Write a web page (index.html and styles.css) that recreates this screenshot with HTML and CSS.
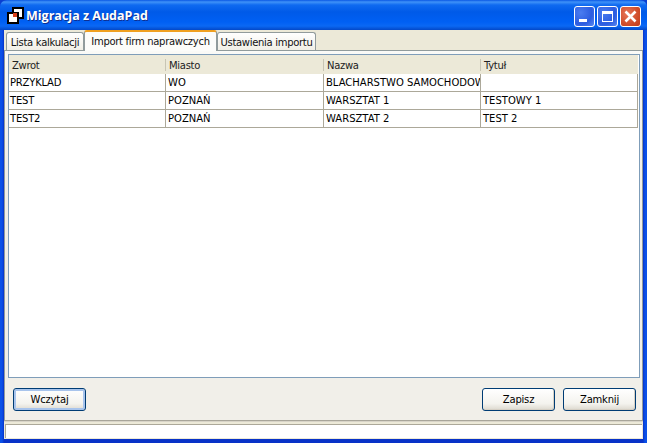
FILE: index.html
```html
<!DOCTYPE html>
<html lang="pl">
<head>
<meta charset="utf-8">
<title>Migracja z AudaPad</title>
<link rel="stylesheet" href="styles.css">
</head>
<body>
<div class="window">
  <div class="titlebar">
    <svg class="appicon" width="17" height="17" viewBox="0 0 17 17">
      <rect x="6" y="1" width="10" height="10" fill="#fff" stroke="#000" stroke-width="2"/>
      <rect x="1" y="6" width="10" height="10" fill="#fff" stroke="#000" stroke-width="2"/>
      <rect x="6" y="6" width="4" height="4" fill="#d8401c"/>
      <rect x="10" y="5" width="2" height="2" fill="#000"/>
    </svg>
    <span class="title">Migracja z AudaPad</span>
    <div class="controls">
      <div class="ctl ctl-blue">
        <svg width="19" height="19" viewBox="0 0 19 19"><rect x="4" y="12" width="8" height="3" fill="#fff"/></svg>
      </div>
      <div class="ctl ctl-blue">
        <svg width="19" height="19" viewBox="0 0 19 19"><rect x="4.5" y="4.5" width="10" height="10" fill="none" stroke="#fff"/><rect x="4" y="4" width="11" height="3" fill="#fff"/></svg>
      </div>
      <div class="ctl ctl-red">
        <svg width="19" height="19" viewBox="0 0 19 19"><path d="M4.5 4.5L14.5 14.5M14.5 4.5L4.5 14.5" stroke="#fff" stroke-width="2.6" fill="none"/></svg>
      </div>
    </div>
  </div>
  <div class="client">
    <div class="tabs">
      <div class="tab tab-first">Lista kalkulacji</div>
      <div class="tab tab-active">Import firm naprawczych</div>
      <div class="tab tab-last">Ustawienia importu</div>
    </div>
    <div class="panel">
      <div class="tablebox">
        <table class="grid">
          <thead>
            <tr><th>Zwrot</th><th>Miasto</th><th>Nazwa</th><th>Tytuł</th></tr>
          </thead>
          <tbody>
            <tr><td>PRZYKLAD</td><td>WO</td><td>BLACHARSTWO SAMOCHODOWE</td><td></td></tr>
            <tr><td>TEST</td><td>POZNAŃ</td><td>WARSZTAT 1</td><td>TESTOWY 1</td></tr>
            <tr><td>TEST2</td><td>POZNAŃ</td><td>WARSZTAT 2</td><td>TEST 2</td></tr>
          </tbody>
        </table>
      </div>
      <div class="actions">
        <button class="btn btn-focus">Wczytaj</button>
        <div class="spacer"></div>
        <button class="btn">Zapisz</button>
        <button class="btn">Zamknij</button>
      </div>
    </div>
    <div class="status"><div class="status-box"></div></div>
  </div>
</div>
</body>
</html>
```

FILE: styles.css
```css
html, body {
  margin: 0;
  padding: 0;
  width: 647px;
  height: 443px;
  overflow: hidden;
  background: #0a3fd0;
}
.window {
  width: 647px;
  height: 443px;
  display: flex;
  flex-direction: column;
  font: 10px "DejaVu Sans", sans-serif;
  color: #000;
  background: linear-gradient(to right, #0a50e8 0, #0a50e8 2px, #0832c8 4px, #0832c8 643px, #0a50e8 645px);
  border-radius: 7px 7px 0 0;
  overflow: hidden;
}
.titlebar {
  height: 30px;
  flex: none;
  display: flex;
  align-items: center;
  padding: 0 6px 0 7px;
  background: linear-gradient(to bottom, #0a58e4 0, #3f92f8 2px, #0f6af0 5px, #005ae8 12px, #0060f4 22px, #0a68f4 26px, #0348c8 30px);
}
.appicon {
  flex: none;
  margin-right: 2px;
  margin-top: 1px;
}
.title {
  font: bold 12.5px "Open Sans", sans-serif;
  color: #fff;
  text-shadow: 1px 1px 0 #0f2f90;
  flex: 1;
}
.controls {
  display: flex;
  gap: 2px;
  margin-top: 3px;
}
.ctl {
  width: 21px;
  height: 21px;
  box-sizing: border-box;
  border: 1px solid #fff;
  border-radius: 3px;
  display: flex;
  align-items: center;
  justify-content: center;
}
.ctl svg {
  flex: none;
}
.ctl-blue {
  background: radial-gradient(circle at 30% 30%, #4a7cf0 0, #2c5ce0 60%, #5a88f0 100%);
}
.ctl-red {
  background: radial-gradient(circle at 35% 35%, #e8775a 0, #d04e2c 60%, #c03a18 100%);
}
.client {
  flex: 1;
  display: flex;
  flex-direction: column;
  margin: 0 4px 4px;
  background: #ece9d8;
  min-height: 0;
}
.tabs {
  display: flex;
  align-items: flex-end;
  height: 20px;
  flex: none;
  padding: 0 0 0 2px;
  box-sizing: border-box;
  position: relative;
  z-index: 1;
}
.tab {
  box-sizing: border-box;
  height: 18px;
  line-height: 19px;
  text-align: center;
  border: 1px solid #919b9c;
  border-bottom: none;
  border-radius: 3px 3px 0 0;
  background: linear-gradient(to bottom, #fff, #f1efe6);
  white-space: nowrap;
  color: #111;
  letter-spacing: -0.3px;
}
.tab-first {
  width: 78px;
}
.tab-active {
  width: 133px;
  height: 21px;
  line-height: 19px;
  margin-bottom: -1px;
  background: #fcfcfa;
  border-top: 2px solid #f0a020;
  border-left-color: #919b9c;
  position: relative;
  z-index: 2;
}
.tab-last {
  width: 99px;
}
.panel {
  flex: 1;
  min-height: 0;
  display: flex;
  flex-direction: column;
  border: 1px solid #919b9c;
  border-bottom-color: #a8a59a;
  background: linear-gradient(to bottom, #fafaf7, #f1efe9 120px);
  padding: 0 2px 0 3px;
}
.tablebox {
  height: 324px;
  flex: none;
  margin-top: 3px;
  box-sizing: border-box;
  border: 1px solid #7f9db9;
  background: #fff;
  overflow: hidden;
}
.grid {
  border-collapse: separate;
  border-spacing: 0;
  table-layout: fixed;
  width: 629px;
}
.grid th:nth-child(2) {
  width: 158px;
}
.grid th {
  font-weight: normal;
  text-align: left;
  height: 19px;
  padding: 2px 0 0 3px;
  background: #ece9d8 linear-gradient(#c8c5b4, #c8c5b4) right center / 1px 12px no-repeat;
  color: #222;
  box-sizing: border-box;
  white-space: nowrap;
  overflow: hidden;
  letter-spacing: -0.3px;
}
.grid th:last-child {
  background: #ece9d8;
}
.grid td {
  height: 18px;
  padding: 0 0 0 2px;
  box-sizing: border-box;
  white-space: nowrap;
  overflow: hidden;
  border-right: 1px solid #aca899;
  border-bottom: 1px solid #aca899;
}
.grid td:first-child {
  padding-left: 1px;
  letter-spacing: -0.2px;
}
.actions {
  flex: 1;
  display: flex;
  align-items: center;
  gap: 8px;
  padding: 0 2px 0 4px;
  margin: 0 2px 0 1px;
}
.spacer {
  flex: 1;
}
.btn {
  width: 73px;
  height: 23px;
  font: 10px "DejaVu Sans", sans-serif;
  letter-spacing: -0.2px;
  color: #000;
  padding: 0;
  border: 1px solid #003c74;
  border-radius: 3px;
  background: linear-gradient(to bottom, #fff, #f4f3ee 70%, #dcd8ce);
  box-shadow: inset -1px -1px 0 #d6d0c5;
}
.btn-focus {
  box-shadow: inset 0 0 0 2px #a8c4ec;
}
.status {
  height: 18px;
  flex: none;
  box-sizing: border-box;
  padding: 2px 1px 1px 1px;
  background: #ece9d8;
  border-top: 1px solid #d8d4c8;
}
.status-box {
  height: 100%;
  box-sizing: border-box;
  background: #fff;
  border-top: 1px solid #aca899;
  border-left: 1px solid #aca899;
}
```
